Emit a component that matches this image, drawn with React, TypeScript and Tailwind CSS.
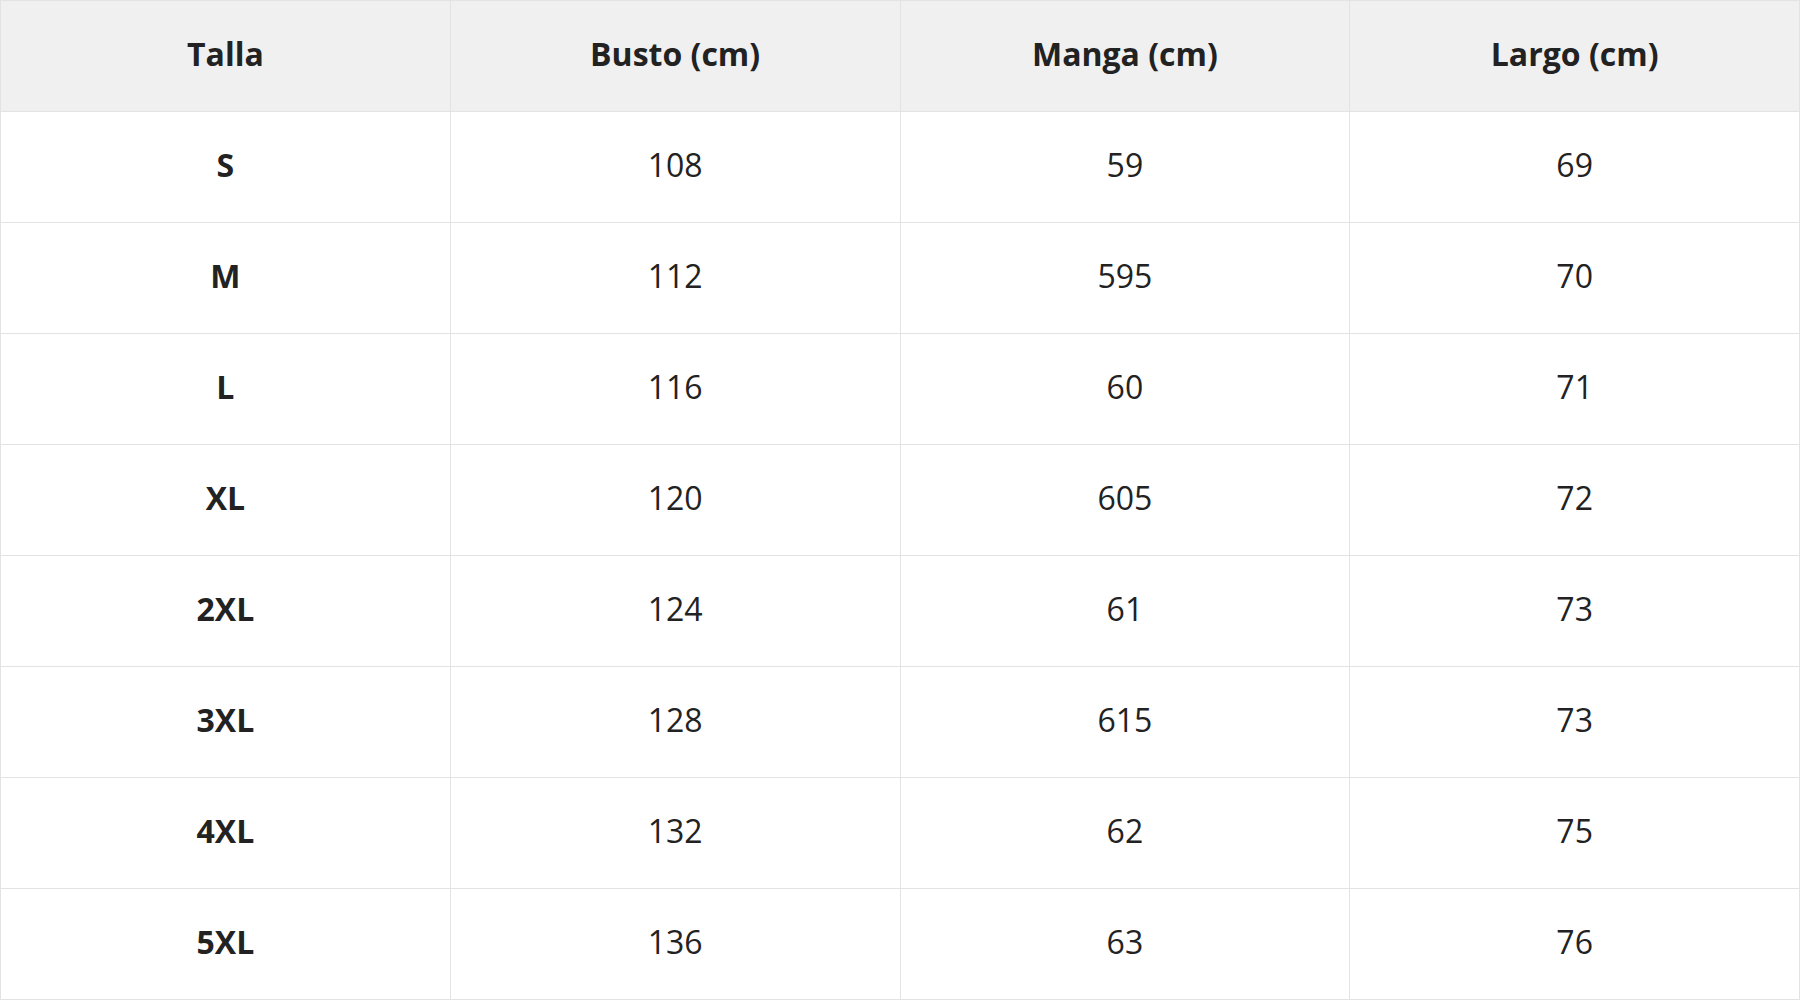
const headers = ["Talla", "Busto (cm)", "Manga (cm)", "Largo (cm)"];

const rows = [
  ["S", "108", "59", "69"],
  ["M", "112", "595", "70"],
  ["L", "116", "60", "71"],
  ["XL", "120", "605", "72"],
  ["2XL", "124", "61", "73"],
  ["3XL", "128", "615", "73"],
  ["4XL", "132", "62", "75"],
  ["5XL", "136", "63", "76"],
];

export default function App() {
  return (
    <div className="w-[1800px] h-[1000px] bg-white font-['Open_Sans',sans-serif] text-[#222222]">
      <table className="w-full h-full table-fixed border-collapse text-center text-[32px]">
        <thead>
          <tr className="bg-[#f0f0f0]">
            {headers.map((h) => (
              <th key={h} className="border border-[#e3e3e3] font-bold h-[111px] pb-[4px]">
                {h}
              </th>
            ))}
          </tr>
        </thead>
        <tbody>
          {rows.map((r) => (
            <tr key={r[0]}>
              {r.map((c, i) => (
                <td
                  key={i}
                  className={`border border-[#e3e3e3] h-[111px] pb-[4px] ${i === 0 ? "font-bold" : "font-normal"}`}
                >
                  {c}
                </td>
              ))}
            </tr>
          ))}
        </tbody>
      </table>
    </div>
  );
}
